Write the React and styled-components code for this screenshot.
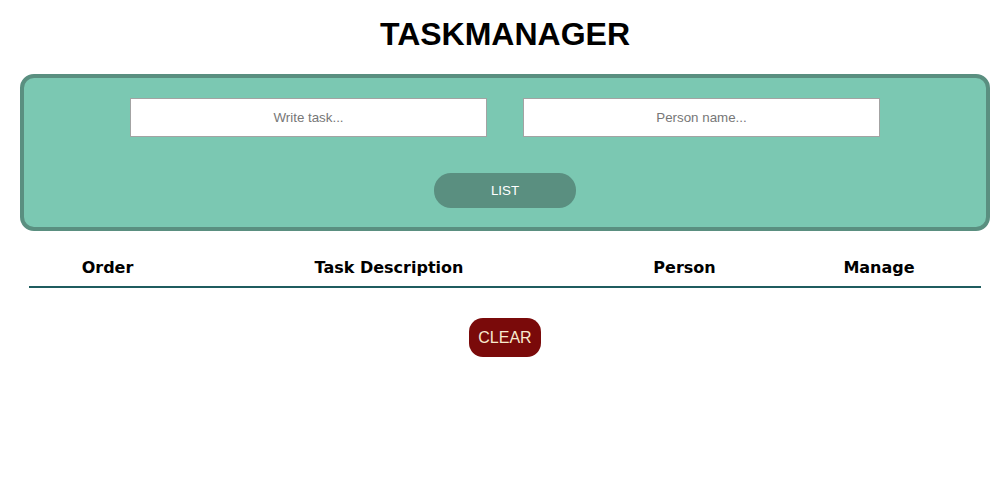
import React, { useState } from "react";
import styled, { createGlobalStyle } from "styled-components";

const GlobalStyle = createGlobalStyle`
  html, body {
    margin: 0;
    padding: 0;
    background: #ffffff;
  }
  body {
    font-family: "Liberation Sans", Arial, sans-serif;
  }
`;

const Page = styled.div`
  padding: 16px 6px 0 20px;
`;

const Title = styled.h1`
  margin: 0 0 21px 0;
  text-align: center;
  font-family: "Liberation Sans", Arial, sans-serif;
  font-size: 32px;
  font-weight: bold;
  color: #000;
`;

const FormPanel = styled.form`
  background: #7bc8b2;
  border: 4px solid #5a8f80;
  border-radius: 14px;
  padding: 20px 0 19px;
  display: flex;
  flex-direction: column;
  align-items: center;
  gap: 36px;
`;

const InputRow = styled.div`
  display: flex;
  gap: 36px;
`;

const TextInput = styled.input`
  width: 357px;
  height: 39px;
  box-sizing: border-box;
  border: 1px solid #a3a3a3;
  background: #fff;
  text-align: center;
  font-family: "Liberation Sans", Arial, sans-serif;
  font-size: 13.33px;
  outline: none;
  &::placeholder {
    color: #777;
  }
`;

const ListButton = styled.button`
  width: 142px;
  height: 35px;
  border: none;
  border-radius: 17px;
  background: #5a8f80;
  color: #fff;
  font-family: "Liberation Sans", Arial, sans-serif;
  font-size: 13.33px;
  cursor: pointer;
`;

const Table = styled.table`
  margin: 19px 9px 0;
  width: 952px;
  border-collapse: collapse;
  table-layout: fixed;
`;

const HeadCell = styled.th`
  width: ${(p) => p.$w}px;
  height: 34px;
  padding: 0 0 2px;
  box-sizing: content-box;
  text-align: center;
  vertical-align: middle;
  font-family: "DejaVu Sans", Verdana, sans-serif;
  font-size: 16px;
  font-weight: bold;
  color: #000;
  border-bottom: 2px solid #1f5c5f;
`;

const Footer = styled.div`
  display: flex;
  justify-content: center;
  padding-top: 30px;
`;

const ClearButton = styled.button`
  width: 72px;
  height: 39px;
  border: none;
  border-radius: 14px;
  background: #7a0a0a;
  color: #f8ebcf;
  font-family: "Liberation Sans", Arial, sans-serif;
  font-size: 16px;
  padding: 0;
  cursor: pointer;
`;

const columns = [
  { label: "Order", w: 157 },
  { label: "Task Description", w: 406 },
  { label: "Person", w: 185 },
  { label: "Manage", w: 204 },
];

export default function App() {
  const [task, setTask] = useState("");
  const [person, setPerson] = useState("");
  const [tasks, setTasks] = useState([]);

  const handleSubmit = (e) => {
    e.preventDefault();
    if (!task || !person) return;
    setTasks((prev) => [...prev, { task, person }]);
    setTask("");
    setPerson("");
  };

  return (
    <>
      <GlobalStyle />
      <Page>
        <Title>TASKMANAGER</Title>
        <FormPanel onSubmit={handleSubmit}>
          <InputRow>
            <TextInput
              placeholder="Write task..."
              value={task}
              onChange={(e) => setTask(e.target.value)}
            />
            <TextInput
              placeholder="Person name..."
              value={person}
              onChange={(e) => setPerson(e.target.value)}
            />
          </InputRow>
          <ListButton type="submit">LIST</ListButton>
        </FormPanel>
        <Table>
          <thead>
            <tr>
              {columns.map((c) => (
                <HeadCell key={c.label} $w={c.w}>
                  {c.label}
                </HeadCell>
              ))}
            </tr>
          </thead>
          <tbody>
            {tasks.map((t, i) => (
              <tr key={i}>
                <td>{i + 1}</td>
                <td>{t.task}</td>
                <td>{t.person}</td>
                <td></td>
              </tr>
            ))}
          </tbody>
        </Table>
        <Footer>
          <ClearButton onClick={() => setTasks([])}>CLEAR</ClearButton>
        </Footer>
      </Page>
    </>
  );
}
